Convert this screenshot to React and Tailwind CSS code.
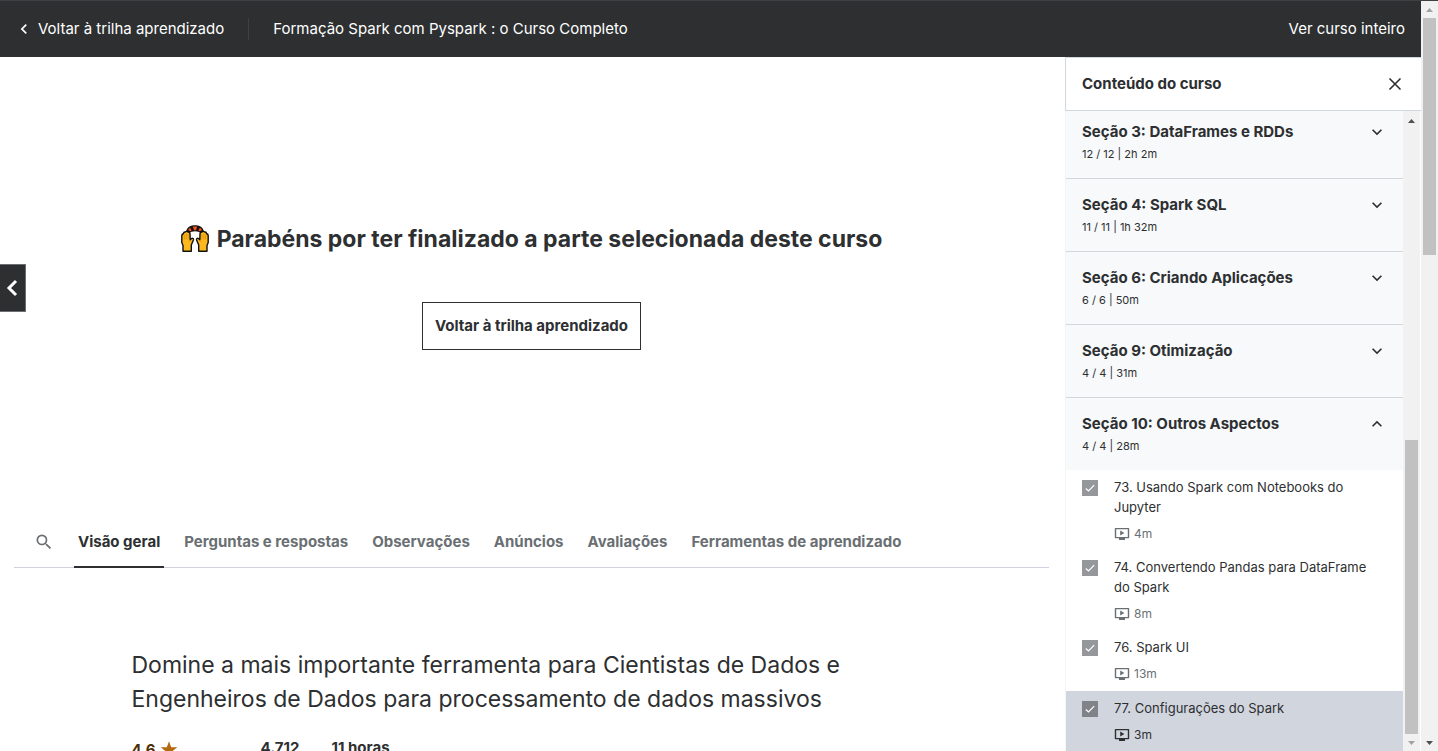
import { useId } from "react";

const sections = [
  { title: "Seção 3: DataFrames e RDDs", meta: "12 / 12 | 2h 2m" },
  { title: "Seção 4: Spark SQL", meta: "11 / 11 | 1h 32m" },
  { title: "Seção 6: Criando Aplicações", meta: "6 / 6 | 50m" },
  { title: "Seção 9: Otimização", meta: "4 / 4 | 31m" },
  { title: "Seção 10: Outros Aspectos", meta: "4 / 4 | 28m", open: true },
];

const lectures = [
  { title: "73. Usando Spark com Notebooks do Jupyter", time: "4m" },
  { title: "74. Convertendo Pandas para DataFrame do Spark", time: "8m" },
  { title: "76. Spark UI", time: "13m" },
  { title: "77. Configurações do Spark", time: "3m", current: true },
];

const tabs = [
  "Visão geral",
  "Perguntas e respostas",
  "Observações",
  "Anúncios",
  "Avaliações",
  "Ferramentas de aprendizado",
];

function Chevron({ direction, className }) {
  const paths = {
    left: "M15.41 7.41 14 6l-6 6 6 6 1.41-1.41L10.83 12z",
    down: "M7.41 8.59 12 13.17l4.59-4.58L18 10l-6 6-6-6z",
    up: "M7.41 15.41 12 10.83l4.59 4.58L18 14l-6-6-6 6z",
  };
  return (
    <svg viewBox="0 0 24 24" fill="currentColor" className={className} aria-hidden="true">
      <path d={paths[direction]} />
    </svg>
  );
}

function RaisedHands() {
  const hand = (
    <>
      <path
        d="M2 26.300V20.500L.8 17.500V11C.9 9.500 1.400 8.800 2.300 8.800 2.500 7.600 3.200 6.900 4.200 7 4.800 6.200 6.400 6.200 6.900 7 8 6.800 8.900 7.500 9 8.800L9.200 14.800 10.600 13.500C11.700 12.800 12.900 13.700 12.400 15L10.300 20V26.300Z"
        fill="#fdb81e"
        stroke="#111"
        strokeWidth="1.4"
        strokeLinejoin="round"
      />
      <path d="M3.300 9.500v5M5.200 8.500v6M7.100 9v5.500M9.200 15 7.800 17" stroke="#d98e0b" strokeWidth=".7" fill="none" />
    </>
  );
  return (
    <svg viewBox="0 0 28 28" className="h-7 w-7 shrink-0" role="img" aria-label="Mãos levantadas">
      <path d="M5 7C5.500 3.500 7.500 1.600 9.500 1 11 0 17 0 18.500 1 20.500 1.600 22.500 3.500 23 7L19.500 8.200C18.500 7 16.500 6.300 14 6.300S9.500 7 8.500 8.200Z" fill="#111" />
      <path d="M7 5 9 2.400 10.700 5.400 9.200 6.300ZM11.800 1.400h4.400L15 5.300h-2ZM21 5 19 2.400 17.300 5.400l1.500.9Z" fill="#f4511e" />
      {hand}
      <g transform="translate(28 0) scale(-1 1)">{hand}</g>
    </svg>
  );
}

function VideoIcon() {
  return (
    <svg viewBox="0 0 16 14" className="h-3.5 w-4" aria-hidden="true">
      <path d="M1.500 1.600h13v9h-13z" fill="none" stroke="currentColor" strokeWidth="1.4" strokeLinejoin="round" />
      <path d="M5 11h6v2H5zM6.200 3.600v5l4.200-2.500z" fill="currentColor" />
    </svg>
  );
}

function Triangle({ up, dim }) {
  return (
    <svg viewBox="0 0 17 17" className={`h-[17px] w-[17px] shrink-0 ${dim ? "text-[#a3a3a3]" : "text-[#505050]"}`} aria-hidden="true">
      <path d={up ? "M5 11l3.500-4 3.500 4z" : "M5 7l3.500 4L12 7z"} fill="currentColor" />
    </svg>
  );
}

function Lecture({ title, time, current }) {
  const id = useId();
  return (
    <li className={`flex shrink-0 gap-4 pt-[7px] pr-6 pb-1.5 pl-4 ${current ? "mt-px bg-[#d1d5de]" : "bg-white"}`}>
      <span className="relative mt-[3px] h-4 w-4 shrink-0">
        <input
          id={id}
          type="checkbox"
          defaultChecked
          className={`peer block h-4 w-4 appearance-none ${current ? "bg-[#808387]" : "bg-[#96979a]"}`}
        />
        <svg
          viewBox="0 0 16 16"
          className="pointer-events-none absolute inset-0 hidden h-4 w-4 text-white peer-checked:block"
          fill="none"
          stroke="currentColor"
          strokeWidth="1.2"
          aria-hidden="true"
        >
          <path d="M3.800 8.500l2.700 2.500L12.200 5.200" />
        </svg>
      </span>
      <div className="min-w-0 flex-1">
        <label htmlFor={id} className="block text-[13px] leading-5">{title}</label>
        <div className={`mt-[7px] flex h-5 items-center gap-1 text-xs ${current ? "" : "text-[#6a6f73]"}`}>
          <VideoIcon />
          <span>{time}</span>
        </div>
      </div>
    </li>
  );
}

export default function App() {
  return (
    <div className="flex h-screen overflow-hidden bg-white font-['Inter',sans-serif] text-[15px] text-[#2d2f31]">
      <div className="flex min-w-0 flex-1 flex-col">
        <header className="flex h-[57px] shrink-0 items-center border-t border-[#3e4143] bg-[#2d2f31] pr-4 pl-3.5 text-white">
          <a href="#trilha" className="flex items-center gap-1">
            <Chevron direction="left" className="h-5 w-5" />
            Voltar à trilha aprendizado
          </a>
          <span className="mx-6 h-[22px] w-px bg-[#3e4143]" />
          <h1>Formação Spark com Pyspark : o Curso Completo</h1>
          <a href="#curso" className="ml-auto">Ver curso inteiro</a>
        </header>

        <div className="flex min-h-0 flex-1">
          <main className="min-w-0 flex-1 overflow-hidden pr-0.5">
            <section className="relative flex h-[459px] flex-col items-center justify-center gap-[49px] pt-px">
              <h2 className="flex items-center gap-2 text-[23px] leading-7 font-bold">
                <RaisedHands />
                Parabéns por ter finalizado a parte selecionada deste curso
              </h2>
              <button className="h-12 border border-[#2d2f31] px-3 pt-0.5 font-bold">
                Voltar à trilha aprendizado
              </button>
              <button aria-label="Anterior" className="absolute top-[207px] left-0 flex h-12 w-[26px] items-center justify-center border border-l-0 border-[#6a6f73] bg-[#2d2f31] text-white">
                <svg viewBox="0 0 24 24" className="h-6 w-6" fill="none" stroke="currentColor" strokeWidth="3" aria-hidden="true">
                  <path d="M15 5 8 12l7 7" />
                </svg>
              </button>
            </section>

            <nav className="mx-3.5 flex h-[52px] items-stretch border-b border-[#d1d2e0] pl-4">
              <button aria-label="Pesquisar" className="mr-4 flex items-center px-1 text-[#6a6f73]">
                <svg viewBox="0 0 24 24" className="h-5 w-5" fill="currentColor" aria-hidden="true">
                  <path d="M15.500 14h-.79l-.28-.27A6.471 6.471 0 0 0 16 9.500 6.500 6.500 0 1 0 9.500 16c1.610 0 3.090-.59 4.230-1.570l.27.28v.79l5 4.990L20.490 19l-4.990-5zm-6 0C7.010 14 5 11.990 5 9.500S7.010 5 9.500 5 14 7.010 14 9.500 11.990 14 9.500 14z" />
                </svg>
              </button>
              <div className="flex gap-4">
                {tabs.map((tab, i) => (
                  <button
                    key={tab}
                    className={`-mb-px border-b-2 px-1 pt-0.5 font-bold ${i === 0 ? "border-[#2d2f31]" : "border-transparent text-[#6a6f73]"}`}
                  >
                    {tab}
                  </button>
                ))}
              </div>
            </nav>

            <section className="mx-auto mt-20 max-w-[800px]">
              <p className="max-w-[740px] text-[23px] leading-[34px]">
                Domine a mais importante ferramenta para Cientistas de Dados e Engenheiros de Dados para processamento de dados massivos
              </p>
              <div className="mt-5 flex items-start leading-6 font-bold">
                <div className="flex w-[129px] items-center gap-1 pt-0.5 text-[#4d3105]">
                  4,6
                  <svg viewBox="0 0 24 24" className="h-5 w-5 text-[#b4690e]" fill="currentColor" aria-hidden="true">
                    <path d="m12 1.500 2.600 7.300H22l-6 4.700 2.200 7.500-6.200-4.400L5.800 21 8 13.500 2 8.800h7.400z" />
                  </svg>
                </div>
                <div className="w-[71px]">4.712</div>
                <div>11 horas</div>
              </div>
            </section>
          </main>

          <aside className="flex w-[356px] shrink-0 flex-col">
            <div className="flex h-[54px] shrink-0 items-center justify-between border-y border-l border-[#d1d7dc] px-4">
              <h2 className="font-bold">Conteúdo do curso</h2>
              <button aria-label="Fechar">
                <svg viewBox="0 0 20 20" className="h-5 w-5" fill="none" stroke="currentColor" strokeWidth="1.6" aria-hidden="true">
                  <path d="m4.500 4.500 11 11m0-11-11 11" />
                </svg>
              </button>
            </div>
            <div className="flex min-h-0 flex-1 border-l border-[#f3f4f6] pr-px">
              <div className="flex min-w-0 flex-1 flex-col justify-end overflow-hidden">
                {sections.map((s) => (
                  <button
                    key={s.title}
                    aria-expanded={!!s.open}
                    className={`flex shrink-0 items-start justify-between bg-[#f7f9fb] p-4 text-left ${s.open ? "" : "border-b border-[#d1d7dc]"}`}
                  >
                    <span className="flex flex-col gap-1">
                      <span className="leading-5 font-bold">{s.title}</span>
                      <span className="text-[11px] leading-4">{s.meta}</span>
                    </span>
                    <Chevron direction={s.open ? "up" : "down"} className="h-5 w-5" />
                  </button>
                ))}
                <ul className="flex shrink-0 flex-col">
                  {lectures.map((l) => (
                    <Lecture key={l.title} {...l} />
                  ))}
                </ul>
              </div>
              <div className="flex w-[17px] flex-col bg-[#f1f1f1] pt-px">
                <Triangle up />
                <div className="mx-0.5 mt-auto h-[294px] bg-[#c1c1c1]" />
                <Triangle dim />
              </div>
            </div>
          </aside>
        </div>
      </div>

      <div className="flex w-[17px] shrink-0 flex-col border-t border-[#3e4143] bg-[#f1f1f1]">
        <Triangle up dim />
        <div className="mx-0.5 h-[237px] bg-[#c1c1c1]" />
        <div className="mt-auto">
          <Triangle />
        </div>
      </div>
    </div>
  );
}
